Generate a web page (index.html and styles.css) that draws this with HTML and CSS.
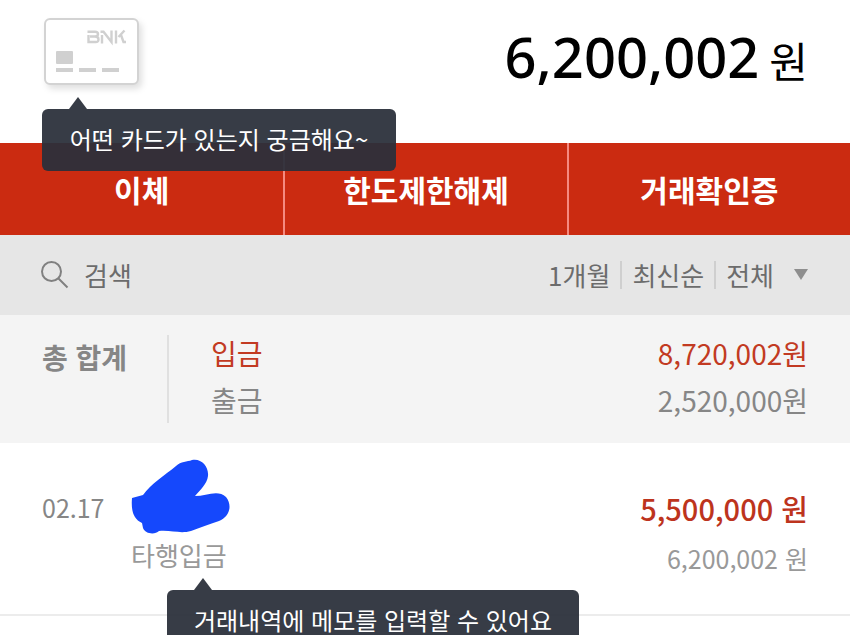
FILE: index.html
```html
<!DOCTYPE html>
<html lang="ko">
<head>
<meta charset="utf-8">
<meta name="viewport" content="width=device-width, initial-scale=1">
<title>거래내역</title>
<link rel="stylesheet" href="styles.css">
</head>
<body>
<main class="app">
  <header class="account">
    <div class="card-anchor">
      <svg class="card" viewBox="0 0 96 68" aria-hidden="true">
        <rect x="1" y="1" width="93" height="65" rx="5" fill="#fff" stroke="#d3d3d3" stroke-width="2"/>
        <g fill="none" stroke="#d0d0d0" stroke-width="2.4">
          <path d="M43.500 13.700H51Q54 13.700 54 16T51 18.500H46M51 18.500Q54.500 18.500 54.500 21.500T51 24H44.500V17"/>
          <path d="M58 17V25.500M56.500 13.700H59.500L67.500 24V12.500"/>
          <path d="M72 12.500V25.500M80.500 12.500L74.500 19M77 17L79.500 24H82"/>
        </g>
        <g fill="#d0d0d0">
          <rect x="12" y="33" width="17" height="13" rx="1"/>
          <rect x="12" y="50" width="17" height="4"/>
          <rect x="35" y="50" width="17" height="4"/>
          <rect x="58" y="50" width="17" height="4"/>
        </g>
      </svg>
      <div class="tip tip-card" role="tooltip">어떤 카드가 있는지 궁금해요~</div>
    </div>
    <p class="balance"><span class="balance-num">6,200,002</span><span class="balance-unit">원</span></p>
  </header>

  <nav class="actions">
    <button type="button">이체</button>
    <button type="button">한도제한해제</button>
    <button type="button">거래확인증</button>
  </nav>

  <div class="toolbar">
    <button type="button" class="search">
      <svg class="search-icon" viewBox="0 0 28 28" aria-hidden="true">
        <g fill="none" stroke="#808080" stroke-width="2"><circle cx="10.500" cy="10.500" r="9.500"/><path d="M17 17L26.500 26.500"/></g>
      </svg>
      <span>검색</span>
    </button>
    <button type="button" class="filter">
      <span>1개월</span><span>최신순</span><span>전체</span>
      <svg class="caret" viewBox="0 0 14 12" aria-hidden="true"><path d="M0 0H14L7 11Z" fill="#8e8e8e"/></svg>
    </button>
  </div>

  <section class="summary">
    <h2>총 합계</h2>
    <dl>
      <div class="sum-row in"><dt>입금</dt><dd>8,720,002원</dd></div>
      <div class="sum-row"><dt>출금</dt><dd>2,520,000원</dd></div>
    </dl>
  </section>

  <article class="entry">
    <time class="date">02.17</time>
    <div class="detail">
      <svg class="scribble" viewBox="0 0 100 76" aria-hidden="true">
        <path fill="#1548fc" d="M1 39L12 36C20 25 34 16 45 7C50 2 56 3 61 1C70 -1 78 7 77 17C76 25 69 31 64 37C75 37 87 30 95 38C102 47 98 58 88 62C78 65 69 69 60 72C49 75 41 71 28 72C24 76 14 75 12 69L11 64C2 60 0 51 1 39Z"/>
      </svg>
      <div class="memo">타행입금
        <div class="tip tip-memo" role="tooltip">거래내역에 메모를 입력할 수 있어요</div>
      </div>
    </div>
    <div class="amounts">
      <strong>5,500,000 원</strong>
      <span>6,200,002 원</span>
    </div>
  </article>
</main>
</body>
</html>
```

FILE: styles.css
```css
* {
  box-sizing: border-box;
}

body,
p,
h2,
dl,
dd {
  margin: 0;
}

body {
  font-family: "Noto Sans CJK KR", sans-serif;
  font-size: 28px;
  line-height: 40px;
  color: #868686;
  background: #fff;
}

button {
  padding: 0;
  border: 0;
  background: none;
  font: inherit;
  color: inherit;
}

svg {
  display: block;
}

.app {
  min-height: 100vh;
  overflow: hidden;
}

.account {
  display: flex;
  justify-content: space-between;
  align-items: flex-start;
  height: 143px;
  padding: 18px 42px 0 44px;
}

.card-anchor {
  position: relative;
}

.card {
  width: 96px;
  height: 68px;
  filter: drop-shadow(3px 4px 3px rgba(0, 0, 0, 0.12));
}

.balance {
  display: flex;
  align-items: baseline;
  gap: 10px;
  line-height: 76px;
  color: #000;
}

.balance-num {
  font-family: "Noto Sans", sans-serif;
  font-size: 56px;
  font-weight: 500;
}

.balance-unit {
  font-size: 42px;
}

.tip {
  position: absolute;
  z-index: 1;
  height: 62px;
  border-radius: 6px;
  background: rgba(43, 48, 58, 0.94);
  color: #fff;
  font-size: 24px;
  font-weight: 400;
  line-height: 60px;
  text-align: center;
  white-space: nowrap;
}

.tip::before {
  content: "";
  position: absolute;
  bottom: 100%;
  left: 27px;
  border: solid transparent;
  border-width: 0 9px 12px;
  border-bottom-color: rgba(43, 48, 58, 0.94);
}

.tip-card {
  top: 91px;
  left: -2px;
  width: 354px;
}

.tip-memo {
  top: 55px;
  left: 36px;
  width: 412px;
}

.actions {
  display: grid;
  grid-template-columns: repeat(3, 1fr);
  height: 92px;
  background: #cb2b11;
  color: #fff;
  font-size: 30px;
  font-weight: 700;
}

.actions button + button {
  border-left: 2px solid #f58a80;
}

.toolbar {
  display: flex;
  justify-content: space-between;
  align-items: center;
  height: 80px;
  padding: 0 42px 0 41px;
  background: #e6e6e6;
  color: #6c6c6c;
  font-size: 26px;
}

.search {
  display: flex;
  align-items: center;
  gap: 15px;
}

.search-icon {
  width: 28px;
  height: 28px;
}

.filter {
  display: flex;
  align-items: center;
}

.filter span {
  line-height: 28px;
}

.filter span + span {
  margin-left: 10px;
  padding-left: 10px;
  border-left: 2px solid #cfcfcf;
}

.caret {
  width: 14px;
  height: 12px;
  margin-left: 20px;
}

.summary {
  display: flex;
  height: 128px;
  padding: 20px 42px;
  background: #f4f4f4;
}

.summary h2 {
  width: 125px;
  font-size: 28px;
  font-weight: 700;
  line-height: 44px;
}

.summary dl {
  flex: 1;
  padding-left: 42px;
  border-left: 2px solid #e0e0e0;
}

.sum-row {
  display: flex;
  justify-content: space-between;
  height: 47px;
  line-height: 36px;
}

.sum-row.in {
  color: #c23a22;
}

.entry {
  display: flex;
  height: 173px;
  padding: 16px 42px 0;
  border-bottom: 2px solid #ececec;
}

.date {
  width: 89px;
  padding-top: 28px;
  font-size: 25px;
}

.detail {
  flex: 1;
}

.scribble {
  width: 100px;
  height: 76px;
}

.memo {
  position: relative;
  font-size: 26px;
  color: #999;
}

.amounts {
  display: flex;
  flex-direction: column;
  gap: 10px;
  padding-top: 29px;
  text-align: right;
  color: #999;
  font-size: 25px;
}

.amounts strong {
  color: #bd341d;
  font-size: 29px;
  font-weight: 500;
}
```
